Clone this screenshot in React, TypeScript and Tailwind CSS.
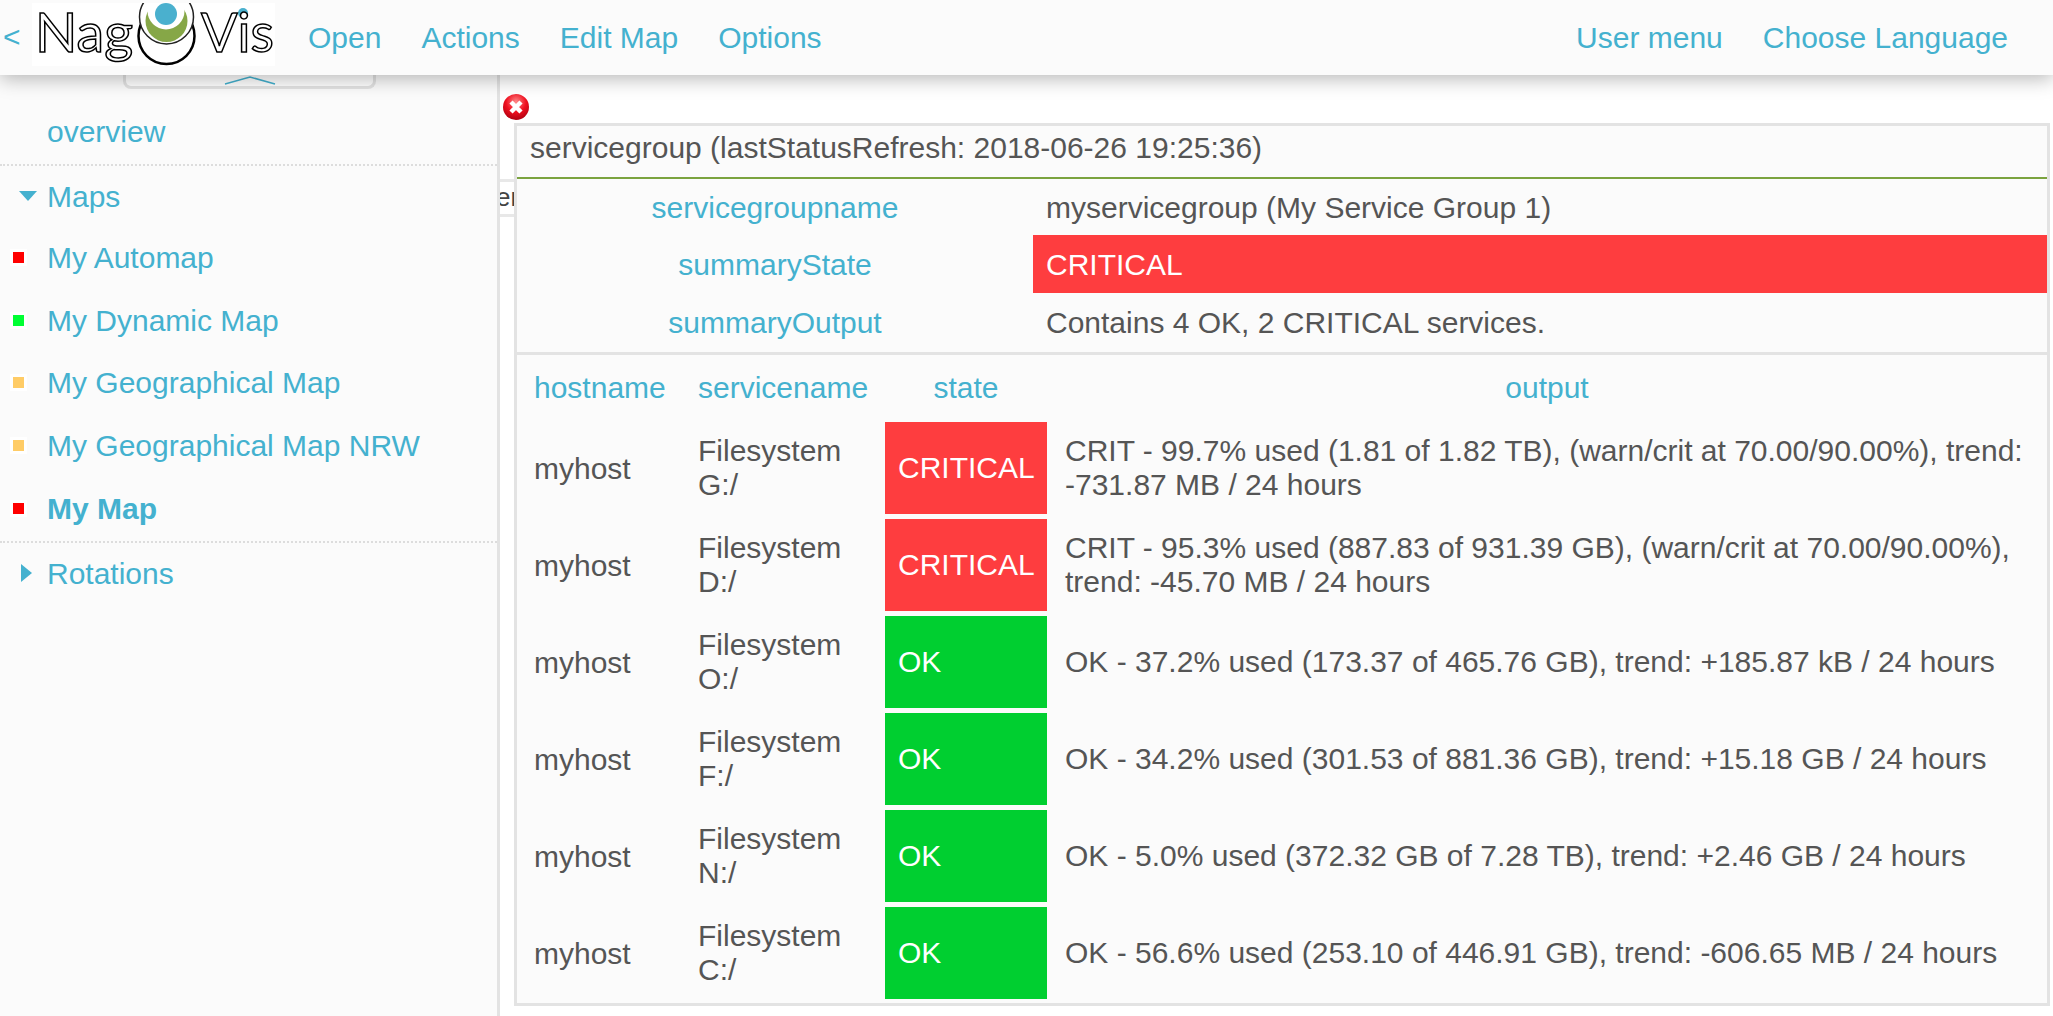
import React from 'react';

const services = [
  { host: 'myhost', name: 'Filesystem G:/', state: 'CRITICAL', output: 'CRIT - 99.7% used (1.81 of 1.82 TB), (warn/crit at 70.00/90.00%), trend: -731.87 MB / 24 hours' },
  { host: 'myhost', name: 'Filesystem D:/', state: 'CRITICAL', output: 'CRIT - 95.3% used (887.83 of 931.39 GB), (warn/crit at 70.00/90.00%), trend: -45.70 MB / 24 hours' },
  { host: 'myhost', name: 'Filesystem O:/', state: 'OK', output: 'OK - 37.2% used (173.37 of 465.76 GB), trend: +185.87 kB / 24 hours' },
  { host: 'myhost', name: 'Filesystem F:/', state: 'OK', output: 'OK - 34.2% used (301.53 of 881.36 GB), trend: +15.18 GB / 24 hours' },
  { host: 'myhost', name: 'Filesystem N:/', state: 'OK', output: 'OK - 5.0% used (372.32 GB of 7.28 TB), trend: +2.46 GB / 24 hours' },
  { host: 'myhost', name: 'Filesystem C:/', state: 'OK', output: 'OK - 56.6% used (253.10 of 446.91 GB), trend: -606.65 MB / 24 hours' }
];

const maps = [
  { name: 'My Automap', color: 'bg-[#ff0000]' },
  { name: 'My Dynamic Map', color: 'bg-[#00ff33]' },
  { name: 'My Geographical Map', color: 'bg-[#ffcc66]' },
  { name: 'My Geographical Map NRW', color: 'bg-[#ffcc66]' },
  { name: 'My Map', color: 'bg-[#ff0000]', active: true }
];

const Logo = () => <svg width="243" height="63" viewBox="0 0 243 63" className="shrink-0 bg-white">
    <circle cx="134.5" cy="33" r="28" fill="#fff" stroke="#000" strokeWidth="2.5" />
    <circle cx="134.5" cy="14" r="27" fill="#fff" stroke="#222" strokeWidth="1.5" />
    <circle cx="134.5" cy="18" r="21" fill="#86a747" />
    <circle cx="134" cy="8" r="18.5" fill="#fff" />
    <circle cx="134" cy="11" r="11" fill="#4ab0ce" />
    <circle cx="211" cy="10" r="5" fill="#4ab0ce" />
    <g fontFamily="Lato, sans-serif" fill="#fff" stroke="#000" strokeWidth="1.5">
      <text x="3" y="49" fontSize="54" textLength="98" lengthAdjust="spacingAndGlyphs">Nag</text>
      <text x="169" y="49" fontSize="54" textLength="73" lengthAdjust="spacingAndGlyphs">Vis</text>
    </g>
  </svg>;

const CloseIcon = () => <svg width="28" height="28" viewBox="0 0 28 28" className="absolute left-[2px] top-[18px]">
    <defs>
      <radialGradient id="closeRed" cx="50%" cy="30%" r="70%">
        <stop offset="0%" stopColor="#ff8a8a" />
        <stop offset="55%" stopColor="#f01020" />
        <stop offset="100%" stopColor="#b00010" />
      </radialGradient>
    </defs>
    <circle cx="14" cy="14" r="13" fill="url(#closeRed)" />
    <path d="M9 9 L19 19 M19 9 L9 19" stroke="#fff" strokeWidth="4.5" />
  </svg>;

const App = () => {
  return <div className="relative h-[1016px] w-[2053px] overflow-hidden bg-white font-['Liberation_Sans',Arial,sans-serif] text-[30px] text-[#555555]">
      <header className="relative z-20 flex h-[75px] items-center justify-between bg-[#fbfbfb] text-[#44b1cf] shadow-[0_4px_18px_rgba(0,0,0,0.28)]">
        <div className="flex items-center">
          <span className="ml-[3px] w-[29px] -translate-y-[1px]">&lt;</span>
          <div className="-mt-[6px]"><Logo /></div>
          <nav className="ml-[33px] flex gap-[40px]">
            <span>Open</span>
            <span>Actions</span>
            <span>Edit Map</span>
            <span>Options</span>
          </nav>
        </div>
        <div className="mr-[45px] flex gap-[40px]">
          <span>User menu</span>
          <span>Choose Language</span>
        </div>
      </header>

      <div className="flex h-[941px]">
        <aside className="relative w-[500px] shrink-0 border-r-[3px] border-[#e3e3e3] bg-[#fbfbfb] text-[#44b1cf]">
          <div className="absolute left-[123px] top-0 z-10 flex h-[14px] w-[253px] justify-center rounded-b-[8px] border-x-[3px] border-b-[3px] border-[#e3e3e3] bg-white">
            <svg width="52" height="10" viewBox="0 0 52 10">
              <path d="M1 9 L26 2 L51 9" fill="none" stroke="#44b1cf" strokeWidth="1.5" />
            </svg>
          </div>
          <div className="flex h-[89px] items-end pb-[10px] pl-[47px]">overview</div>
          <div className="border-t-2 border-dotted border-[#dddddd]" />
          <div className="flex h-[60px] items-center">
            <svg width="18" height="10" viewBox="0 0 18 10" className="ml-[19px] mr-[10px]"><path d="M0 0 H18 L9 10 Z" fill="#44b1cf" /></svg>
            Maps
          </div>
          {maps.map(map => <div key={map.name} className={`flex h-[62.7px] items-center ${map.active ? 'font-bold' : ''}`}>
              <span className="ml-[10px] mr-[20px] flex h-[17px] w-[17px] items-center justify-center bg-white">
                <span className={`h-[11px] w-[11px] ${map.color}`} />
              </span>
              {map.name}
            </div>)}
          <div className="mt-[2px] border-t-2 border-dotted border-[#dddddd]" />
          <div className="flex h-[60px] items-center">
            <svg width="11" height="18" viewBox="0 0 11 18" className="ml-[21px] mr-[15px]"><path d="M0 0 L11 9 L0 18 Z" fill="#44b1cf" /></svg>
            Rotations
          </div>
        </aside>

        <main className="relative flex-1">
          <CloseIcon />
          <div className="absolute left-0 top-[104px] h-[38px] w-[14px] overflow-hidden border-y-[3px] border-[#e8e8e8] bg-white text-[26px] leading-[30px] text-[#444444]">
            <span className="-ml-[4px]">er</span>
          </div>
          <section className="relative ml-[14px] mt-[48px] w-[1536px] border-[3px] border-[#e3e3e3] bg-[#fbfbfb]">
            <div className="flex h-[53px] items-center border-b-2 border-[#7ba33f] pb-[9px] pl-[13px]">
              servicegroup (lastStatusRefresh: 2018-06-26 19:25:36)
            </div>
            <div className="grid grid-cols-[516px_1fr] border-b-[3px] border-[#e3e3e3] pb-[1px]">
              <div className="flex h-[56px] items-center justify-center text-[#44b1cf]">servicegroupname</div>
              <div className="flex h-[56px] items-center pl-[13px]">myservicegroup (My Service Group 1)</div>
              <div className="flex h-[58px] items-center justify-center text-[#44b1cf]">summaryState</div>
              <div className="flex h-[58px] items-center bg-[#fe3d3f] pl-[13px] text-white">CRITICAL</div>
              <div className="flex h-[58px] items-center justify-center text-[#44b1cf]">summaryOutput</div>
              <div className="flex h-[58px] items-center pl-[13px]">Contains 4 OK, 2 CRITICAL services.</div>
            </div>
            <div className="grid grid-cols-[168px_200px_162px_1fr] gap-y-[5px] pb-[4px]">
              <div className="flex h-[62px] items-center pl-[17px] pt-[2px] text-[#44b1cf]">hostname</div>
              <div className="flex h-[62px] items-center pl-[13px] pt-[2px] text-[#44b1cf]">servicename</div>
              <div className="flex h-[62px] items-center justify-center pt-[2px] text-[#44b1cf]">state</div>
              <div className="flex h-[62px] items-center justify-center pt-[2px] text-[#44b1cf]">output</div>
              {services.map(service => <React.Fragment key={service.name}>
                  <div className="flex h-[92px] items-center pl-[17px]">{service.host}</div>
                  <div className="flex h-[92px] items-center pl-[13px] pr-[30px] leading-[34px]">{service.name}</div>
                  <div className={`flex h-[92px] items-center pb-[2px] pl-[13px] text-white ${service.state === 'OK' ? 'bg-[#00cf30]' : 'bg-[#fe3d3f]'}`}>{service.state}</div>
                  <div className="flex h-[92px] items-center pl-[18px] pr-[10px] leading-[34px]">{service.output}</div>
                </React.Fragment>)}
            </div>
          </section>
        </main>
      </div>
    </div>;
};

export default App;
